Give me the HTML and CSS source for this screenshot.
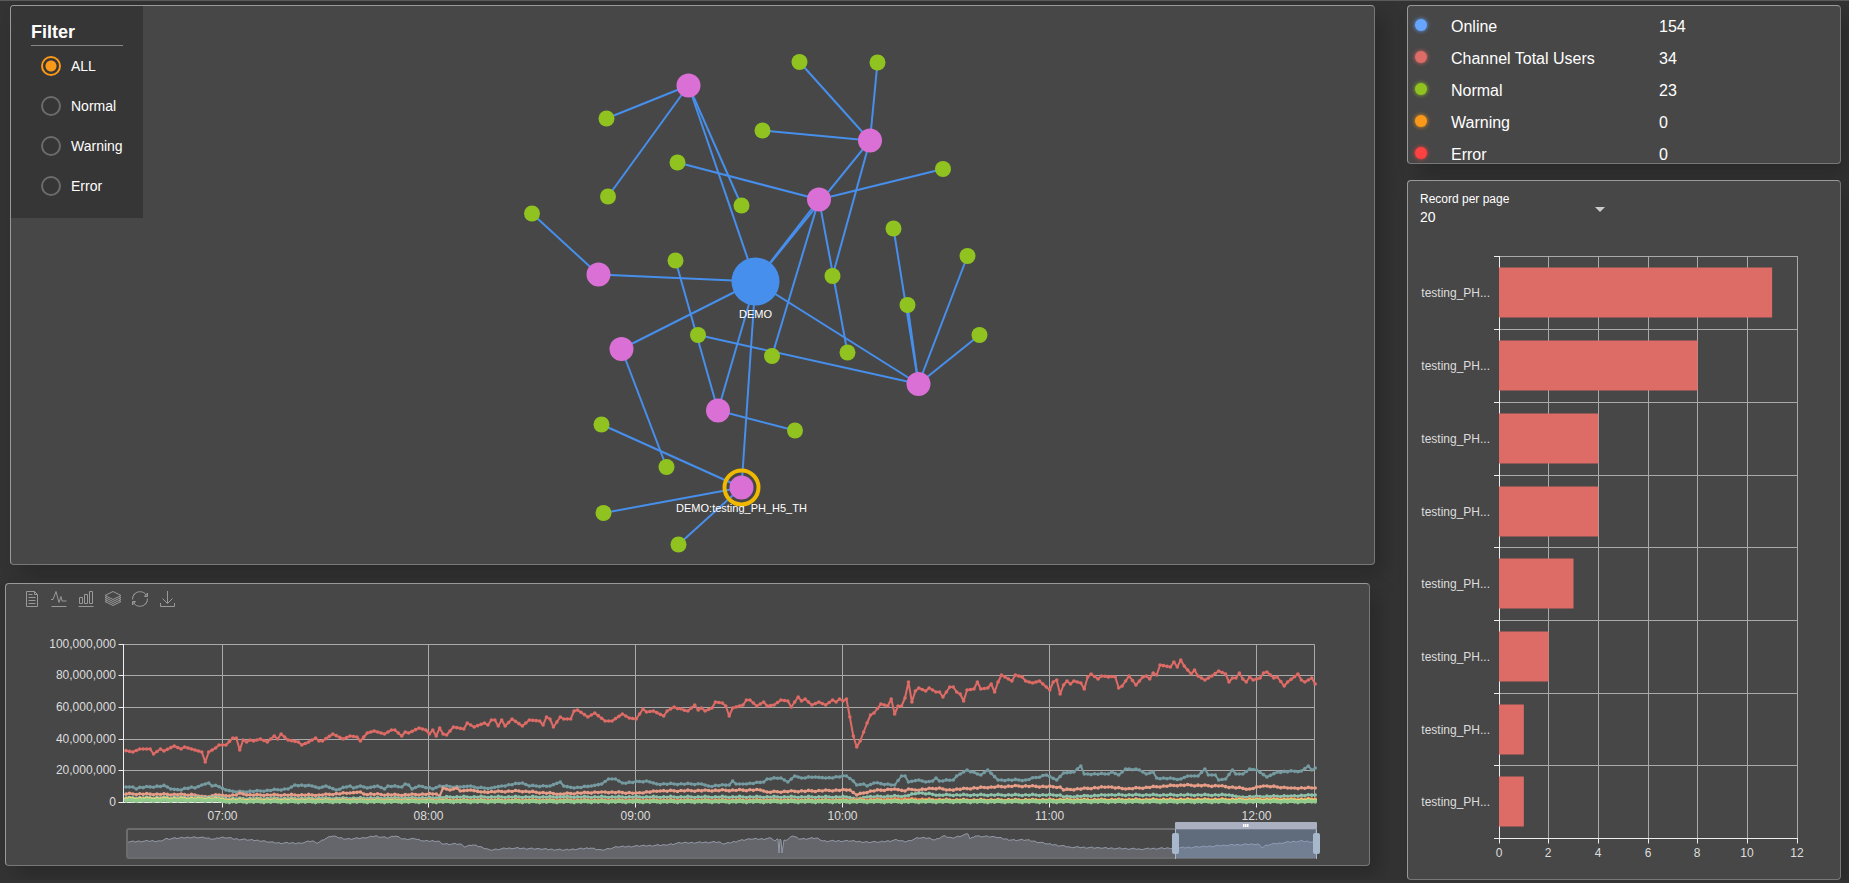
FILE: index.html
```html
<!DOCTYPE html>
<html lang="en">
<head>
    <meta charset="UTF-8">
    <meta name="viewport" content="width=device-width, initial-scale=1.0">
    <title>Channel Monitor</title>
    <link rel="stylesheet" href="styles.css">
</head>
<body>

<div class="dashboard">
    <div class="main-column">
        <div class="panel network-panel">
            <svg class="network" id="network" viewBox="11 6 1363 558" role="img" aria-label="Channel network"></svg>
            <form class="filter">
                <h2>Filter</h2>
                <div class="filter-options">
                    <label><input type="radio" name="filter" value="all" checked>ALL</label>
                    <label><input type="radio" name="filter" value="normal">Normal</label>
                    <label><input type="radio" name="filter" value="warning">Warning</label>
                    <label><input type="radio" name="filter" value="error">Error</label>
                </div>
            </form>
        </div>

        <div class="panel history-panel">
            <div class="toolbar">
                <button type="button" aria-label="Data view">
                    <svg viewBox="0 0 18 18"><path d="M3.5 1.5h8l3 3v12h-11zM11.5 1.5v3h3M5.5 4.5h4M5.5 7.5h7M5.5 10.5h7M5.5 13.5h7"/></svg>
                </button>
                <button type="button" aria-label="Line">
                    <svg viewBox="0 0 18 18"><path d="M1 9.5h2L6 1.5l3 11 2-6 1 4.5h4.500M1.5 16.500h15"/></svg>
                </button>
                <button type="button" aria-label="Bar">
                    <svg viewBox="0 0 18 18"><path d="M2.5 7.5h3v6h-3zM7.5 4.5h3v9h-3zM12.5 1.5h3v12h-3zM1.5 16.5h15"/></svg>
                </button>
                <button type="button" aria-label="Stack">
                    <svg viewBox="0 0 18 18"><path d="M9 1.5l8 4-8 4-8-4zM3 6.500L1 7.500l8 4 8-4-2-1M3 8.500L1 9.500l8 4 8-4-2-1M3 10.500L1 11.500l8 4 8-4-2-1"/></svg>
                </button>
                <button type="button" aria-label="Restore">
                    <svg viewBox="0 0 18 18"><path d="M2 6.500a7.500 7.500 0 0 1 13.500-1M16.500 8.500a7.500 7.500 0 0 1-2.500 6M16 11.500a7.500 7.500 0 0 1-13.500 1M1.500 9.500a7.500 7.500 0 0 1 2.500-6"/><path d="M16.500 3v3.500h-3zM1.500 15v-3.500h3z"/></svg>
                </button>
                <button type="button" aria-label="Save as image">
                    <svg viewBox="0 0 18 18"><path d="M9.5 1v12M4.500 8.500l5 5 5-5M2.500 13v3.500h14V13"/></svg>
                </button>
            </div>
            <svg class="history" id="history" viewBox="6 612 1363 253" role="img" aria-label="Traffic history"></svg>
        </div>
    </div>

    <div class="side-column">
        <div class="panel stats-panel">
            <table class="stats">
                <tr><td class="dot-cell"><span class="dot online"></span></td><th scope="row">Online</th><td>154</td></tr>
                <tr><td class="dot-cell"><span class="dot users"></span></td><th scope="row">Channel Total Users</th><td>34</td></tr>
                <tr><td class="dot-cell"><span class="dot normal"></span></td><th scope="row">Normal</th><td>23</td></tr>
                <tr><td class="dot-cell"><span class="dot warning"></span></td><th scope="row">Warning</th><td>0</td></tr>
                <tr><td class="dot-cell"><span class="dot error"></span></td><th scope="row">Error</th><td>0</td></tr>
            </table>
        </div>

        <div class="panel ranking-panel">
            <div class="page-size">
                <label for="pageSize">Record per page</label>
                <select id="pageSize">
                    <option>10</option>
                    <option selected>20</option>
                    <option>50</option>
                </select>
            </div>
            <svg class="ranking" id="ranking" viewBox="1408 240 432 639" role="img" aria-label="Users per channel"></svg>
        </div>
    </div>
</div>

<script src="script.js"></script>

</body>
</html>
```

FILE: styles.css
```css
* {
    box-sizing: border-box;
}
body {
    font-family: "Liberation Sans", Helvetica, Arial, sans-serif;
    margin: 0;
    border-top: 1px solid #5a5a5a;
    background-color: #333;
    color: #fff;
}
.dashboard {
    display: grid;
    grid-template-columns: minmax(0, 1fr) 434px;
    column-gap: 32px;
    align-items: start;
    padding: 4px 8px 0 5px;
}
.panel {
    position: relative;
    border: 1px solid;
    border-color: #999 #777 #777 #999;
    border-radius: 4px;
    background-color: #474747;
    box-shadow: 10px 10px 20px rgba(0, 0, 0, 0.2);
    overflow: hidden;
}
.panel > svg {
    display: block;
    width: 100%;
    height: auto;
}
.main-column {
    display: flex;
    flex-direction: column;
    gap: 18px;
}
.side-column {
    display: flex;
    flex-direction: column;
    gap: 16px;
}
.network-panel {
    margin-left: 5px;
}
.history-panel {
    margin-right: 5px;
}

/* filter */
.filter {
    position: absolute;
    top: 0;
    left: 0;
    padding: 16px 20px 12px;
    background-color: #363636;
}
.filter h2 {
    margin: 0;
    padding-bottom: 2px;
    border-bottom: 1px solid #888;
    font-size: 18px;
    line-height: 21px;
}
.filter-options {
    width: 92px;
    padding-left: 10px;
}
.filter label {
    display: flex;
    align-items: center;
    gap: 10px;
    height: 40px;
    font-size: 14px;
    cursor: pointer;
}
.filter input {
    appearance: none;
    flex: none;
    width: 20px;
    height: 20px;
    margin: 0;
    border: 2px solid #6b6b6b;
    border-radius: 50%;
}
.filter input:checked {
    border-color: #fa9819;
    background: radial-gradient(circle, #fa9819 5px, transparent 6px);
}

/* network */
.link {
    stroke: #478fec;
    stroke-width: 2;
}
.root-node {
    fill: #478fec;
}
.hub-node {
    fill: #da70d6;
}
.leaf-node {
    fill: #90c320;
}
.selected-ring {
    fill: none;
    stroke: #f0b800;
    stroke-width: 4;
}
.node-label {
    fill: #fff;
    font-size: 11px;
    text-anchor: middle;
}

/* charts */
.toolbar {
    display: flex;
    gap: 9px;
    padding: 6px 17px 4px;
}
.toolbar button {
    width: 18px;
    height: 18px;
    padding: 0;
    border: none;
    background: none;
    cursor: pointer;
}
.toolbar svg {
    display: block;
    width: 18px;
    height: 18px;
    fill: none;
    stroke: #999;
    stroke-width: 1;
}
.split-line {
    stroke: #aaa;
}
.axis-line {
    stroke: #eee;
}
.axis-label {
    fill: #ddd;
    font-size: 12px;
}
.axis-label.end {
    text-anchor: end;
}
.axis-label.middle {
    text-anchor: middle;
}
.bar {
    fill: #dd6b66;
}
.series {
    fill: none;
    stroke-width: 2;
    stroke-linejoin: bevel;
}
.zoom-frame {
    fill: none;
    stroke: #6b6c6d;
    stroke-width: 2;
}
.zoom-area {
    fill: #65666b;
}
.zoom-outline {
    fill: none;
    stroke: #9298a6;
}
.zoom-window {
    fill: #87a3ce;
    fill-opacity: 0.4;
}
.zoom-bar {
    fill: #aab0c0;
}
.zoom-handle {
    fill: #a7b7cc;
}
.zoom-grip {
    fill: #fff;
}

/* stats */
.stats-panel {
    height: 159px;
}
.stats {
    width: 100%;
    margin-top: 5px;
    border-collapse: collapse;
    table-layout: fixed;
    font-size: 16px;
    line-height: 32px;
}
.stats th,
.stats td {
    height: 32px;
    padding: 0;
    font-weight: normal;
    text-align: left;
}
.stats th {
    width: 208px;
}
.stats .dot-cell {
    width: 43px;
    padding: 8px 0 0 7px;
    vertical-align: top;
}
.dot {
    display: block;
    width: 12px;
    height: 12px;
    border-radius: 50%;
    background-color: currentColor;
    box-shadow: 0 0 4px currentColor;
}
.online {
    color: #66a6ff;
}
.users {
    color: #dd6b66;
}
.normal {
    color: #90c320;
}
.warning {
    color: #fa9819;
}
.error {
    color: #ff4141;
}

/* page size */
.page-size {
    position: relative;
    width: 200px;
    height: 59px;
    padding: 10px 0 0 12px;
}
.page-size label {
    display: block;
    font-size: 12px;
    line-height: 16px;
}
.page-size select {
    appearance: none;
    display: block;
    width: 100%;
    padding: 0;
    border: none;
    background: none;
    color: #fff;
    font-family: inherit;
    font-size: 14px;
    line-height: 20px;
}
.page-size option {
    background-color: #474747;
}
.page-size::after {
    content: "";
    position: absolute;
    right: 3px;
    top: 26px;
    border: 5px solid transparent;
    border-top-color: #ccc;
    border-bottom: none;
    pointer-events: none;
}
```

FILE: script.js
```js
const SVG_NS = 'http://www.w3.org/2000/svg';

function add(parent, tag, attrs, text) {
    const el = document.createElementNS(SVG_NS, tag);
    for (const key in attrs) {
        el.setAttribute(key, attrs[key]);
    }
    if (text !== undefined) {
        el.textContent = text;
    }
    parent.appendChild(el);
    return el;
}

function line(parent, x1, y1, x2, y2, cls) {
    add(parent, 'line', { x1, y1, x2, y2, class: cls });
}

// Network: every hub is linked to the root and to its own leaves
const root = [755.5, 281.5];
const hubs = [
    { at: [688.5, 85.5], leaves: [[606.5, 118.5], [608, 196.5], [741.5, 205.5]] },
    { at: [870, 140.5], leaves: [[799.5, 62], [877.5, 62.5], [762.5, 130.5], [832.5, 276]] },
    { at: [819, 199.5], leaves: [[677.5, 162.5], [943, 169], [847.5, 352.5], [772, 356]] },
    { at: [598.5, 274.5], leaves: [[532, 213.5]] },
    { at: [621.5, 349], leaves: [[666.5, 467]] },
    { at: [718, 410.5], leaves: [[675.5, 260.5], [795, 430.5]] },
    { at: [918.5, 384], leaves: [[893.5, 228.5], [907.5, 305], [967.5, 256], [979.5, 335], [698, 335]] },
    { at: [741.5, 487.5], leaves: [[601.5, 424.5], [603.5, 513], [678.5, 544.5]], label: 'DEMO:testing_PH_H5_TH' }
];

function drawNetwork() {
    const svg = document.getElementById('network');
    hubs.forEach(hub => {
        line(svg, ...root, ...hub.at, 'link');
        hub.leaves.forEach(leaf => line(svg, ...hub.at, ...leaf, 'link'));
    });
    add(svg, 'circle', { cx: root[0], cy: root[1], r: 24, class: 'root-node' });
    hubs.forEach(hub => {
        hub.leaves.forEach(leaf => add(svg, 'circle', { cx: leaf[0], cy: leaf[1], r: 8, class: 'leaf-node' }));
        add(svg, 'circle', { cx: hub.at[0], cy: hub.at[1], r: 12, class: 'hub-node' });
        if (hub.label) {
            add(svg, 'circle', { cx: hub.at[0], cy: hub.at[1], r: 17, class: 'selected-ring' });
            add(svg, 'text', { x: hub.at[0], y: 512, class: 'node-label' }, hub.label);
        }
    });
    add(svg, 'text', { x: root[0], y: 318, class: 'node-label' }, 'DEMO');
}

// History: turning points of each series, one sample per minute in between
const step = 3.447;
const series = [
    { color: '#759aa0', points: '124,787 132,787 137,789 167,787 171,789 182,790 195,788 202,785 208,783 213,786 227,790 238,792 260,791 288,789 294,785 312,786 318,788 325,786 337,790 350,786 354,788 360,786 368,788 377,786 383,789 388,786 401,787 405,784 409,785 412,789 418,786 434,789 438,786 460,787 470,786 477,788 493,788 503,786 523,783 530,786 550,786 559,782 563,786 573,788 590,786 603,784 608,779 615,779 622,783 645,781 658,784 700,784 707,786 728,785 732,781 737,784 745,784 763,782 767,779 780,778 787,782 793,776 800,778 817,777 827,778 846,776 852,781 856,785 863,784 867,786 873,783 895,785 902,776 905,776 908,782 920,780 925,782 933,781 936,778 940,781 953,780 957,776 967,770 980,775 987,770 997,780 1027,780 1047,775 1057,780 1063,773 1073,772 1080,766 1084,774 1110,774 1113,772 1118,775 1127,769 1140,770 1147,774 1153,772 1156,778 1180,779 1188,776 1198,776 1204,769 1208,775 1215,775 1220,780 1224,779 1232,770 1235,774 1243,774 1249,769 1257,770 1266,777 1277,772 1302,771 1308,766 1311,770 1315,768' },
    { color: '#e69d87', points: '124,795 200,796 208,797 235,795 241,793 246,795 320,795 350,793 360,792 365,794 400,795 435,794 438,796 442,788 450,790 456,788 460,791 472,790 480,792 520,791 560,794 600,792 635,793 660,791 760,790 766,792 850,790 856,795 870,791 895,789 905,791 910,789 915,790 940,788 945,790 990,787 1020,786 1060,787 1065,790 1110,787 1125,789 1180,785 1220,786 1250,789 1265,786 1290,788 1315,788' },
    { color: '#8dc1a9', points: '124,799 436,798 450,797 846,797 856,799 866,797 905,796 918,793 940,795 1060,795 1064,797 1110,795 1230,795 1240,797 1290,796 1315,795' },
    { color: '#ea7e53', points: '124,800 840,800 910,799 960,800 1315,799' },
    { color: '#eedd78', points: '124,800 640,801 1315,800' },
    { color: '#91ca8c', points: '124,801 1315,801' },
    { color: '#91ca8c', points: '124,802 1315,802' },
    { color: '#dd6b66', points: '124,750 132,752 140,749 149,749 153,754 159,749 163,751 174,746 180,749 184,747 192,749 201,752 205,762 208,752 215,748 219,745 225,745 232,738 236,738 239,750 242,740 246,742 250,740 253,741 260,739 267,742 273,736 277,739 280,734 287,740 298,742 301,745 308,742 314,738 319,741 322,741 332,734 342,739 349,736 357,737 360,741 367,733 374,731 384,734 391,730 395,730 401,736 405,732 408,733 419,728 425,730 429,734 432,730 436,736 439,728 442,734 446,735 453,727 463,729 467,723 474,727 483,723 487,725 491,720 494,720 498,726 501,720 505,726 511,719 521,726 528,720 539,721 542,725 546,717 549,719 553,727 560,717 563,719 569,719 573,711 577,710 587,717 594,713 604,721 611,721 622,714 628,718 636,719 642,709 646,712 653,711 663,716 667,711 673,707 687,711 694,705 697,710 701,708 704,711 711,708 715,702 722,703 725,706 729,716 733,708 742,705 746,700 750,700 756,706 763,702 767,706 773,705 780,700 787,701 791,707 798,697 801,701 804,699 811,705 818,702 825,705 832,700 835,702 839,699 842,701 846,699 849,717 853,736 856,747 860,741 863,732 867,723 870,715 874,713 880,704 887,706 891,699 894,714 898,706 901,706 904,698 908,682 911,702 915,691 918,688 925,691 929,688 935,692 938,692 942,697 949,687 953,687 956,692 959,694 963,701 966,690 973,689 977,682 980,689 987,688 991,684 994,692 997,682 1001,675 1011,681 1015,675 1022,677 1025,681 1032,683 1038,681 1049,690 1053,682 1056,680 1059,694 1063,685 1066,681 1070,684 1073,681 1080,683 1084,689 1087,677 1090,674 1097,679 1101,676 1115,677 1118,688 1122,686 1128,676 1135,685 1142,677 1146,676 1149,679 1153,673 1156,675 1159,665 1170,667 1173,662 1177,667 1180,660 1184,666 1191,674 1194,670 1197,676 1204,680 1211,676 1218,671 1225,674 1228,682 1232,678 1235,678 1239,673 1242,679 1246,682 1249,677 1252,680 1259,678 1263,673 1266,672 1273,678 1276,677 1283,686 1287,682 1297,674 1301,680 1304,682 1311,678 1315,684' }
];
const overview = '127,842 145,841 160,841 165,839 180,838 195,837 205,838 215,839 223,837 235,839 250,840 265,841 275,843 300,843 312,841 318,843 325,839 332,836 345,839 365,838 375,836 388,838 395,836 403,839 415,839 425,841 438,841 443,844 460,844 465,847 472,845 482,847 490,850 510,848 540,849 565,850 590,848 602,850 617,847 640,846 665,845 680,843 720,842 724,844 738,841 750,839 765,839 771,838 775,841 778,839 779,853 780,839 781,840 782,853 784,840 787,840 793,836 800,839 818,838 823,841 850,841 865,842 880,842 897,840 905,842 918,838 930,838 935,840 943,836 952,838 968,834 970,839 975,836 995,837 1010,840 1027,840 1048,844 1070,847 1100,848 1140,849 1175,848 1200,847 1230,845 1258,844 1262,848 1266,845 1280,843 1300,841 1316,842';

function parsePoints(text) {
    return text.split(' ').map(pair => pair.split(',').map(Number));
}

function sample(points) {
    const result = [];
    const snapped = points.map(([x, y]) => [Math.round((x - 222.5) / step), y]);
    for (let i = 0; i < snapped.length - 1; i++) {
        const [from, y1] = snapped[i];
        const [to, y2] = snapped[i + 1];
        for (let k = from; k < to; k++) {
            // small ripple on the longer stretches
            const ripple = to - from > 3 && k > from ? (k * 7 % 5 - 2) * 0.3 : 0;
            result.push([222.5 + k * step, y1 + (y2 - y1) * (k - from) / (to - from) + ripple]);
        }
    }
    const last = snapped[snapped.length - 1];
    result.push([222.5 + last[0] * step, last[1]]);
    return result.filter(point => point[0] > 123.5);
}

// Fills the overview up to one point every two pixels
function roughen(points) {
    const result = [];
    for (let i = 0; i < points.length - 1; i++) {
        const [x1, y1] = points[i];
        const [x2, y2] = points[i + 1];
        for (let x = x1; x < x2; x += 2) {
            const ripple = x > x1 ? (x * 13 % 7 - 3) * 0.25 : 0;
            result.push([x, y1 + (y2 - y1) * (x - x1) / (x2 - x1) + ripple]);
        }
    }
    result.push(points[points.length - 1]);
    return result.join(' ');
}

function drawHistory() {
    const svg = document.getElementById('history');
    const rows = [644.5, 675.5, 707.5, 739.5, 770.5, 802.5];
    const rowLabels = ['100,000,000', '80,000,000', '60,000,000', '40,000,000', '20,000,000', '0'];
    const hours = [222.5, 428.5, 635.5, 842.5, 1049.5, 1256.5];
    const hourLabels = ['07:00', '08:00', '09:00', '10:00', '11:00', '12:00'];

    rows.forEach((y, i) => {
        line(svg, 123.5, y, 1314.5, y, i === 5 ? 'axis-line' : 'split-line');
        line(svg, 118.5, y, 123.5, y, 'axis-line');
        add(svg, 'text', { x: 116, y: y + 3.5, class: 'axis-label end' }, rowLabels[i]);
    });
    hours.forEach((x, i) => {
        line(svg, x, 644.5, x, 802.5, 'split-line');
        line(svg, x, 802.5, x, 807.5, 'axis-line');
        add(svg, 'text', { x, y: 820, class: 'axis-label middle' }, hourLabels[i]);
    });
    line(svg, 1314.5, 644.5, 1314.5, 802.5, 'split-line');
    line(svg, 123.5, 644, 123.5, 803, 'axis-line');

    series.forEach(item => {
        const points = sample(parsePoints(item.points));
        add(svg, 'polyline', { points: points.join(' '), class: 'series', stroke: item.color });
        points.forEach(([cx, cy]) => add(svg, 'circle', { cx, cy, r: 1.8, fill: item.color }));
    });

    const outline = roughen(parsePoints(overview));
    add(svg, 'polygon', { points: '127,857 ' + outline + ' 1316,857', class: 'zoom-area' });
    add(svg, 'polyline', { points: outline, class: 'zoom-outline' });
    add(svg, 'rect', { x: 127, y: 829, width: 1189, height: 29, rx: 2, class: 'zoom-frame' });
    add(svg, 'rect', { x: 1175, y: 829, width: 141, height: 29, class: 'zoom-window' });
    add(svg, 'rect', { x: 1175, y: 822, width: 142, height: 7, rx: 1, class: 'zoom-bar' });
    [1243, 1245, 1247].forEach(x => add(svg, 'rect', { x, y: 824, width: 1.5, height: 3, class: 'zoom-grip' }));
    [1175, 1316].forEach(x => {
        add(svg, 'rect', { x, y: 829, width: 1, height: 30, class: 'zoom-handle' });
        add(svg, 'rect', { x: x - 3, y: 833, width: 7, height: 21, rx: 2, class: 'zoom-handle' });
    });
}

// Ranking of the channels by users
const ranking = [11, 8, 4, 4, 3, 2, 1, 1];

function drawRanking() {
    const svg = document.getElementById('ranking');
    const columns = [1499.5, 1548.5, 1598.5, 1648.5, 1697.5, 1747.5, 1797.5];
    const rows = [256.5, 329.5, 402.5, 475.5, 547.5, 620.5, 693.5, 765.5, 838.5];

    columns.forEach((x, i) => {
        line(svg, x, 256, x, 838.5, 'split-line');
        line(svg, x, 838.5, x, 843.5, 'axis-line');
        add(svg, 'text', { x: x - 0.5, y: 857, class: 'axis-label middle' }, i * 2);
    });
    rows.forEach(y => {
        line(svg, 1499.5, y, 1798, y, 'split-line');
        line(svg, 1494, y, 1499.5, y, 'axis-line');
    });
    line(svg, 1499.5, 256, 1499.5, 839, 'axis-line');
    line(svg, 1499.5, 838.5, 1798, 838.5, 'axis-line');
    ranking.forEach((value, i) => {
        const width = value * 24.83;
        add(svg, 'rect', { x: 1499, y: rows[i] + 11, width, height: 50, class: 'bar' });
        add(svg, 'text', { x: 1490, y: rows[i] + 40, class: 'axis-label end' }, 'testing_PH...');
    });
}

drawNetwork();
drawHistory();
drawRanking();
```
